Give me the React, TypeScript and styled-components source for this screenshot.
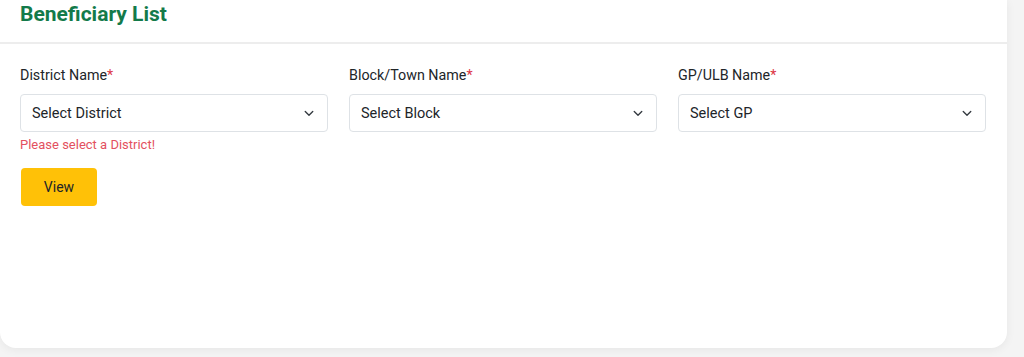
import React from 'react';
import styled, { createGlobalStyle } from 'styled-components';

const GlobalStyle = createGlobalStyle`
	html, body {
		margin: 0;
		padding: 0;
		background: #f4f4f4;
		font-family: Roboto, "Liberation Sans", Arial, sans-serif;
	}
`;

const Page = styled.div`
	width: 1024px;
	height: 357px;
	padding: 0 17px 9px 0;
	box-sizing: border-box;
`;

const Card = styled.div`
	height: 348px;
	background: #fff;
	border-radius: 0 0 16px 16px;
	box-shadow: 0 2px 10px rgba(0, 0, 0, 0.06);
`;

const Header = styled.div`
	padding: 2px 20px 16px;
	border-bottom: 2px solid #ededed;
`;

const Title = styled.h4`
	margin: 0;
	font-size: 21px;
	line-height: 24px;
	font-weight: 700;
	color: #137a4a;
`;

const Body = styled.div`
	padding: 21px 21px 0 20px;
`;

const Grid = styled.div`
	display: grid;
	grid-template-columns: repeat(3, 308px);
	column-gap: 21px;
`;

const Field = styled.div`
	display: flex;
	flex-direction: column;
`;

const Label = styled.label`
	font-size: 14.3px;
	line-height: 21px;
	color: #212529;
	margin-bottom: 8px;
`;

const Star = styled.span`
	color: #dc3545;
`;

const Select = styled.div`
	height: 38px;
	box-sizing: border-box;
	border: 1px solid #dee2e6;
	border-radius: 4px;
	padding: 0 12px 0 11px;
	display: flex;
	align-items: center;
	justify-content: space-between;
	font-size: 14.5px;
	color: #212529;
`;

const Error = styled.div`
	margin-top: 4px;
	font-size: 13px;
	line-height: 18px;
	color: #e35060;
`;

const ViewButton = styled.button`
	margin-top: 14px;
	height: 38px;
	width: 76px;
	margin-left: 1px;
	border: none;
	border-radius: 4px;
	background: #ffc107;
	color: #212529;
	font-family: inherit;
	font-size: 14px;
	cursor: pointer;
`;

const Chevron = () => (
	<svg width="12" height="12" viewBox="0 0 16 16" fill="none">
		<path d="M3 6l5 5 5-5" stroke="#343a40" strokeWidth="1.8" strokeLinecap="round" strokeLinejoin="round" />
	</svg>
);

interface SelectFieldProps {
	label: string;
	placeholder: string;
	error?: string;
}

const SelectField: React.FC<SelectFieldProps> = (props: SelectFieldProps) => {
	return (
		<Field>
			<Label>
				{props.label}
				<Star>*</Star>
			</Label>
			<Select>
				<span>{props.placeholder}</span>
				<Chevron />
			</Select>
			{props.error && <Error>{props.error}</Error>}
		</Field>
	);
};

export default function App() {
	return (
		<Page>
			<GlobalStyle />
			<Card>
				<Header>
					<Title>Beneficiary List</Title>
				</Header>
				<Body>
					<Grid>
						<SelectField label="District Name" placeholder="Select District" error="Please select a District!" />
						<SelectField label="Block/Town Name" placeholder="Select Block" />
						<SelectField label="GP/ULB Name" placeholder="Select GP" />
					</Grid>
					<ViewButton>View</ViewButton>
				</Body>
			</Card>
		</Page>
	);
}
